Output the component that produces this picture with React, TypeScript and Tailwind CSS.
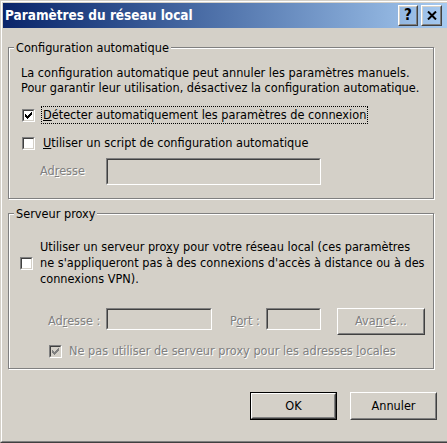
import React from "react";

function Raised({ children, className }: { children?: React.ReactNode; className?: string }) {
  return (
    <div className={"flex border border-t-white border-l-white border-r-[#404040] border-b-[#404040] " + (className ?? "")}>
      <div className="flex flex-1 items-center justify-center border border-t-[#d4d0c8] border-l-[#d4d0c8] border-r-[#808080] border-b-[#808080]">
        {children}
      </div>
    </div>
  );
}

function Sunken({ className }: { className?: string }) {
  return (
    <div className={"flex border border-t-[#808080] border-l-[#808080] border-r-white border-b-white " + (className ?? "")}>
      <div className="flex-1 border border-t-[#404040] border-l-[#404040] border-r-[#d4d0c8] border-b-[#d4d0c8] bg-[#d4d0c8]" />
    </div>
  );
}

function CheckBox({ checked, disabled }: { checked?: boolean; disabled?: boolean }) {
  return (
    <span className="flex h-[13px] w-[13px] shrink-0 border border-t-[#808080] border-l-[#808080] border-r-white border-b-white">
      <span
        className={
          disabled
            ? "flex flex-1 items-center justify-center border border-t-[#404040] border-l-[#404040] border-r-[#d4d0c8] border-b-[#d4d0c8] bg-[#d4d0c8]"
            : "flex flex-1 items-center justify-center border border-t-[#404040] border-l-[#404040] border-r-[#d4d0c8] border-b-[#d4d0c8] bg-white"
        }
      >
        {checked && (
          <svg width="7" height="7" viewBox="0 0 7 7" shapeRendering="crispEdges">
            <path
              d="M6 0h1v3h-1v1h-1v1h-1v1h-1v1h-1v-1h-1v-1h-1v-3h1v1h1v1h1v-1h1v-1h1z"
              fill={disabled ? "#808080" : "#000000"}
            />
          </svg>
        )}
      </span>
    </span>
  );
}

const dis = "text-[#808080] [text-shadow:1px_1px_0_#ffffff]";

export default function App() {
  return (
    <div className="h-[443px] w-[447px] overflow-hidden border-t border-l border-b border-t-[#d4d0c8] border-l-[#d4d0c8] border-b-[#404040] bg-[#d4d0c8] font-['DejaVu_Sans_Condensed','DejaVu_Sans',sans-serif] text-[12.6px] text-black">
      <div className="flex h-full flex-col border-t border-l border-b border-t-white border-l-white border-b-[#808080] pt-px pl-px pb-px">
        {/* Title bar */}
        <div className="flex h-[25px] shrink-0 items-center bg-linear-to-r from-[#0a246a] to-[#a6caf0] pl-[2px] pr-[5px]">
          <span className="flex-1 text-[13.5px] font-bold leading-none text-white">Paramètres du réseau local</span>
          <Raised className="h-[21px] w-[20px]">
            <span className="text-[15px] font-bold leading-none text-black">?</span>
          </Raised>
          <Raised className="ml-[3px] h-[21px] w-[21px]">
            <svg width="10" height="9" viewBox="0 0 10 9">
              <path d="M1 0.5 L9 8.5 M9 0.5 L1 8.5" stroke="#000" strokeWidth="2" />
            </svg>
          </Raised>
        </div>

        {/* Body */}
        <div className="flex flex-1 flex-col pl-[5px]">
          <fieldset className="mt-[12px] w-[426px] border border-[#808080] pb-[13px] shadow-[1px_1px_0_#ffffff,inset_1px_1px_0_#ffffff]">
            <legend className="ml-[5px] bg-[#d4d0c8] px-[2px] leading-[15px]">Configuration automatique</legend>
            <p className="ml-[12px] mt-[10px] leading-[15px]">
              La configuration automatique peut annuler les paramètres manuels.
              <br />
              Pour garantir leur utilisation, désactivez la configuration automatique.
            </p>
            <div className="ml-[13px] mt-[11px] flex h-[18px] items-center">
              <CheckBox checked />
              <span className="ml-[6px] flex h-[18px] items-center border border-dotted border-black px-px">
                <span>
                  <u>D</u>étecter automatiquement les paramètres de connexion
                </span>
              </span>
            </div>
            <div className="ml-[13px] mt-[10px] flex h-[18px] items-center">
              <CheckBox />
              <span className="ml-[7px] px-px">
                <u>U</u>tiliser un script de configuration automatique
              </span>
            </div>
            <div className="mt-[6px] flex h-[27px] items-center">
              <span className={"ml-[31px] w-[66px] " + dis}>
                Ad<u>r</u>esse
              </span>
              <Sunken className="h-[27px] w-[215px]" />
            </div>
          </fieldset>

          <fieldset className="mt-[7px] w-[426px] border border-[#808080] pb-[9px] shadow-[1px_1px_0_#ffffff,inset_1px_1px_0_#ffffff]">
            <legend className="ml-[5px] bg-[#d4d0c8] px-[2px] leading-[15px]">Serveur proxy</legend>
            <div className="mt-[18px] flex items-center">
              <span className="ml-[11px]">
                <CheckBox />
              </span>
              <p className="ml-[7px] leading-[16px]">
                Utiliser un serveur pro<u>x</u>y pour votre réseau local (ces paramètres
                <br />
                ne s'appliqueront pas à des connexions d'accès à distance ou à des
                <br />
                connexions VPN).
              </p>
            </div>
            <div className="mt-[21px] flex h-[27px] items-start">
              <span className={"ml-[39px] mt-[4px] w-[58px] " + dis}>
                Ad<u>r</u>esse :
              </span>
              <Sunken className="h-[22px] w-[106px]" />
              <span className={"ml-[18px] mt-[4px] w-[36px] " + dis}>
                P<u>o</u>rt :
              </span>
              <Sunken className="h-[22px] w-[55px]" />
              <Raised className="ml-[16px] h-[27px] w-[88px]">
                <span className={dis}>
                  Ava<u>n</u>cé...
                </span>
              </Raised>
            </div>
            <div className="mt-[8px] flex h-[16px] items-center">
              <span className="ml-[40px]">
                <CheckBox checked disabled />
              </span>
              <span className={"ml-[7px] " + dis}>
                Ne pas utiliser de serveur proxy pour les adresses <u>l</u>ocales
              </span>
            </div>
          </fieldset>

          <div className="mt-[23px] flex justify-end pr-[10px]">
            <div className="flex h-[28px] w-[87px] border border-black">
              <Raised className="flex-1">
                <span>OK</span>
              </Raised>
            </div>
            <Raised className="ml-[13px] h-[28px] w-[87px]">
              <span>Annuler</span>
            </Raised>
          </div>
        </div>
      </div>
    </div>
  );
}
